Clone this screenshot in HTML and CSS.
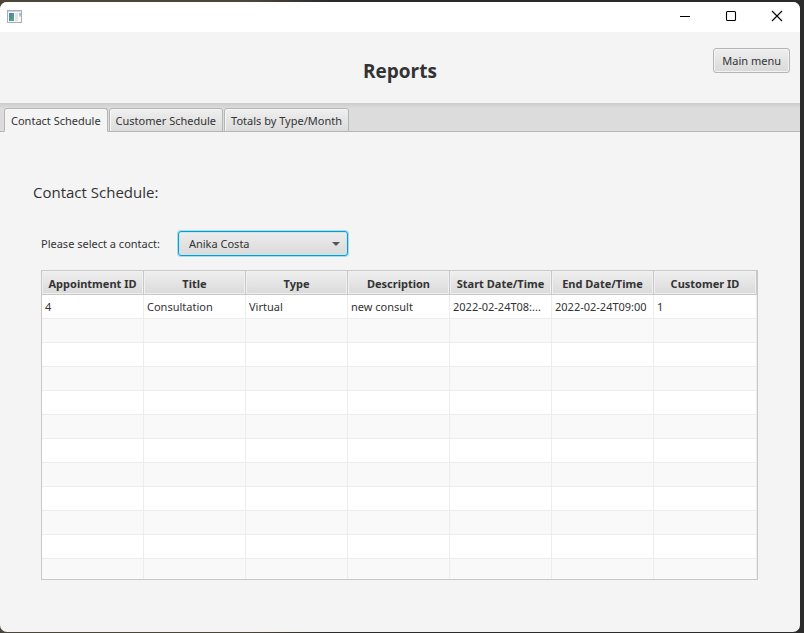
FILE: index.html
```html
<!DOCTYPE html>
<html lang="en">
<head>
<meta charset="utf-8">
<title>Reports</title>
<link rel="stylesheet" href="styles.css">
</head>
<body>
<div class="window">
  <div class="titlebar">
    <svg class="app-icon" width="16" height="14" viewBox="0 0 16 14" aria-hidden="true">
      <defs>
        <linearGradient id="pane" x1="0" y1="0" x2="1" y2="1"><stop offset="0" stop-color="#4a7fb0"/><stop offset="1" stop-color="#55ab80"/></linearGradient>
        <linearGradient id="side" x1="0" y1="0" x2="0" y2="1"><stop offset="0" stop-color="#8fb4dc"/><stop offset=".5" stop-color="#a8d8b4"/><stop offset="1" stop-color="#fff"/></linearGradient>
      </defs>
      <rect x=".5" y=".5" width="14" height="12" fill="#f8f8fa" stroke="#abadb7"/>
      <path d="M1 1.500h13" stroke="#cdd0df"/>
      <rect x="2" y="3" width="5" height="8" fill="url(#pane)"/>
      <rect x="8" y="3" width="3" height="8" fill="#e3e3e7"/>
      <rect x="12" y="3" width="2" height="5" fill="url(#side)"/>
    </svg>
    <div class="window-controls">
      <button type="button" aria-label="Minimize"><svg width="12" height="12" viewBox="0 0 12 12"><path d="M1 6.500h10" stroke="#000"/></svg></button>
      <button type="button" aria-label="Maximize"><svg width="12" height="12" viewBox="0 0 12 12"><rect x="1.500" y="1.500" width="9" height="9" rx="1" fill="none" stroke="#000" stroke-width="1.100"/></svg></button>
      <button type="button" aria-label="Close"><svg width="12" height="12" viewBox="0 0 12 12"><path d="M1 1l10 10M11 1L1 11" stroke="#000" stroke-width="1.100"/></svg></button>
    </div>
  </div>
  <header class="header">
    <h1>Reports</h1>
    <button type="button" class="menu-button">Main menu</button>
  </header>
  <div class="tabs" role="tablist">
    <button type="button" role="tab" class="tab selected" aria-selected="true">Contact Schedule</button>
    <button type="button" role="tab" class="tab" aria-selected="false">Customer Schedule</button>
    <button type="button" role="tab" class="tab" aria-selected="false">Totals by Type/Month</button>
  </div>
  <main class="panel">
    <h2>Contact Schedule:</h2>
    <div class="field">
      <label for="contact">Please select a contact:</label>
      <div class="combo">
        <select id="contact"><option>Anika Costa</option></select>
        <svg width="8" height="4" viewBox="0 0 8 4" aria-hidden="true"><path d="M0 0h8L4 4z" fill="#555"/></svg>
      </div>
    </div>
    <div class="table-view">
      <table>
        <thead>
          <tr><th>Appointment ID</th><th>Title</th><th>Type</th><th>Description</th><th>Start Date/Time</th><th>End Date/Time</th><th>Customer ID</th></tr>
        </thead>
        <tbody>
          <tr><td>4</td><td>Consultation</td><td>Virtual</td><td>new consult</td><td>2022-02-24T08:...</td><td>2022-02-24T09:00</td><td>1</td></tr>
          <tr><td></td><td></td><td></td><td></td><td></td><td></td><td></td></tr>
          <tr><td></td><td></td><td></td><td></td><td></td><td></td><td></td></tr>
          <tr><td></td><td></td><td></td><td></td><td></td><td></td><td></td></tr>
          <tr><td></td><td></td><td></td><td></td><td></td><td></td><td></td></tr>
          <tr><td></td><td></td><td></td><td></td><td></td><td></td><td></td></tr>
          <tr><td></td><td></td><td></td><td></td><td></td><td></td><td></td></tr>
          <tr><td></td><td></td><td></td><td></td><td></td><td></td><td></td></tr>
          <tr><td></td><td></td><td></td><td></td><td></td><td></td><td></td></tr>
          <tr><td></td><td></td><td></td><td></td><td></td><td></td><td></td></tr>
          <tr><td></td><td></td><td></td><td></td><td></td><td></td><td></td></tr>
          <tr><td></td><td></td><td></td><td></td><td></td><td></td><td></td></tr>
        </tbody>
      </table>
    </div>
  </main>
</div>
</body>
</html>
```
FILE: styles.css
```css
* { box-sizing: border-box; }

body {
  margin: 0;
  height: 100vh;
  padding: 2px 4px 1px 0;
  background: linear-gradient(90deg, #4b453a 0, #4b453a 250px, #2b2b2b 330px);
  color: #333;
  font: 11px/16px "Noto Sans", "Open Sans", sans-serif;
}

button, select { font: inherit; color: inherit; }

.window {
  display: flex;
  flex-direction: column;
  height: 100%;
  overflow: hidden;
  border-radius: 7px;
  background: #f4f4f4;
}

.titlebar {
  display: flex;
  flex: none;
  align-items: center;
  justify-content: space-between;
  height: 30px;
  padding-left: 7px;
  background: #fff;
}

.app-icon { display: block; }

.window-controls { display: flex; height: 100%; }

.window-controls button {
  display: flex;
  align-items: center;
  justify-content: center;
  width: 46px;
  padding: 0 0 2px;
  border: 0;
  background: none;
}

.header {
  display: grid;
  flex: none;
  grid-template-columns: 1fr auto 1fr;
  height: 71px;
  padding: 16px 10px 0 10px;
}

h1, h2 { font-family: "Open Sans", "Noto Sans", sans-serif; }

h1 {
  grid-column: 2;
  margin: 0;
  padding-top: 9px;
  font-size: 19px;
  line-height: 28px;
  font-weight: 700;
}

.menu-button {
  justify-self: end;
  height: 25px;
  padding: 0 8px;
  border: 1px solid #b5b5b5;
  border-radius: 3px;
  background: linear-gradient(#efefef, #d9d9d9);
  box-shadow: inset 0 0 0 1px #f3f3f3;
}

.tabs {
  display: flex;
  flex: none;
  gap: 1px;
  height: 29px;
  padding: 5px 4px 0;
  background: linear-gradient(#cbcbcb, #dcdcdc 5px);
  box-shadow: inset 0 -1px #b5b5b5;
}

.tab {
  padding: 2px 6px 0;
  border: 1px solid #b5b5b5;
  border-radius: 3px 3px 0 0;
  background: linear-gradient(#efefef, #dcdcdc);
  box-shadow: inset 1px 1px #f7f7f7;
  white-space: nowrap;
}

.tab.selected {
  border-bottom-color: #f4f4f4;
  background: #f4f4f4;
}

.panel {
  display: flex;
  flex: 1;
  flex-direction: column;
  min-height: 0;
  padding: 49px 42px 52px 41px;
}

h2 {
  margin: 0 0 27px -8px;
  font-size: 15px;
  line-height: 23px;
  font-weight: 400;
}

.field {
  display: flex;
  align-items: center;
  gap: 18px;
  margin-bottom: 14px;
}

.combo { position: relative; width: 170px; }

.combo select {
  display: block;
  width: 100%;
  height: 25px;
  padding: 0 10px;
  border: 1px solid #039ed3;
  border-radius: 3px;
  outline: 0;
  appearance: none;
  background: linear-gradient(#ececec, #dadada);
  box-shadow: 0 0 0 1px #a5dcee, inset 0 0 0 1px #cfe3ea;
}

.combo svg {
  position: absolute;
  top: 11px;
  right: 8px;
  pointer-events: none;
}

.table-view {
  flex: 1;
  min-height: 0;
  overflow: hidden;
  border: 1px solid #c8c8c8;
  background: #fff;
}

table {
  width: 100%;
  table-layout: fixed;
  border-collapse: separate;
  border-spacing: 0;
}

th, td {
  height: 24px;
  overflow: hidden;
  white-space: nowrap;
}

th {
  padding: 2px 0 0;
  border-right: 1px solid #c8c8c8;
  border-bottom: 1px solid #c8c8c8;
  background: linear-gradient(#efefef, #dadada);
  box-shadow: inset 0 0 0 1px #f0f0f0;
  font-weight: 700;
}

th:not(:last-child) { width: 102px; }

td {
  padding: 0 3px;
  border-right: 1px solid #ededed;
  border-bottom: 1px solid #ededed;
}

tbody tr:nth-child(even) { background: #f9f9f9; }
```
